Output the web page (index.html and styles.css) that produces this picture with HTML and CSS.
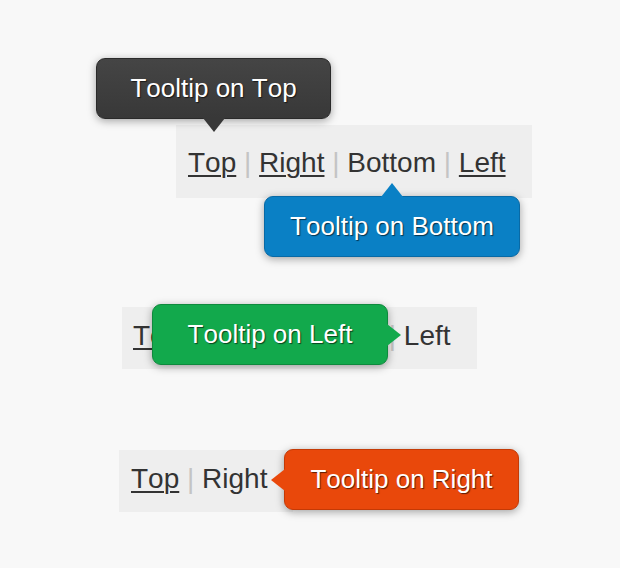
FILE: index.html
```html
<!DOCTYPE html>
<html>
<head>
<meta charset="utf-8">
<link rel="stylesheet" href="styles.css">
</head>
<body>
<div class="stage">
  <div class="panel panel-1">
    <a class="link">Top</a> <span class="sep">|</span> <a class="link">Right</a> <span class="sep">|</span> <span class="plain">Bottom</span> <span class="sep">|</span> <a class="link">Left</a>
    <div class="tip tip-top">Tooltip on Top</div>
    <div class="tip tip-bottom">Tooltip on Bottom</div>
  </div>
  <div class="panel panel-2">
    <a class="link">Top</a> <span class="sep">|</span> <a class="link">Right</a> <span class="sep">|</span> <a class="link">Bottom</a> <span class="sep">|</span> <span class="plain">Left</span>
    <div class="tip tip-left">Tooltip on Left</div>
  </div>
  <div class="panel panel-3">
    <a class="link">Top</a> <span class="sep">|</span> <span class="plain">Right</span>
    <div class="tip tip-right">Tooltip on Right</div>
  </div>
</div>
</body>
</html>
```
FILE: styles.css
```css
html, body {
  margin: 0;
  padding: 0;
}
body {
  width: 620px;
  height: 568px;
  background: #f8f8f8;
  font-family: "Liberation Sans", Arial, sans-serif;
  font-kerning: none;
  overflow: hidden;
}
.stage {
  display: flex;
  flex-direction: column;
  align-items: flex-start;
}
.panel {
  position: relative;
  background: #eeeeee;
  font-size: 28px;
  color: #333;
  white-space: nowrap;
  padding: 0 26px 0 12px;
}
.panel-1 {
  margin: 125px 0 0 176px;
  height: 73px;
  line-height: 75px;
}
.panel-2 {
  margin: 109px 0 0 122px;
  height: 62px;
  line-height: 58px;
  padding-left: 11px;
}
.panel-3 {
  margin: 81px 0 0 119px;
  height: 62px;
  line-height: 58px;
}
.link {
  color: #333;
  text-decoration: underline;
  text-decoration-thickness: 2px;
  text-underline-offset: 3px;
}
.plain {
  color: #333;
}
.sep {
  color: #c4c4c4;
}
.tip {
  position: absolute;
  height: 59px;
  line-height: 59px;
  border-radius: 9px;
  color: #fff;
  font-size: 26px;
  text-align: center;
  text-shadow: 1px 1px 1px rgba(0,0,0,0.6);
  box-shadow: 0 2px 8px rgba(0,0,0,0.35);
}
.tip::after {
  content: "";
  position: absolute;
  width: 0;
  height: 0;
  border: 11px solid transparent;
}
.tip-top {
  left: -80px;
  top: -67px;
  width: 233px;
  background: linear-gradient(#454545, #383838);
  border: 1px solid #2a2a2a;
}
.tip-top::after {
  left: 50%;
  margin-left: -11px;
  top: 100%;
  border-top: 14px solid #383838;
  border-bottom: 0;
}
.tip-bottom {
  left: 88px;
  top: 71px;
  width: 254px;
  background: #0a80c5;
  border: 1px solid #086aa6;
}
.tip-bottom::after {
  left: 50%;
  margin-left: -11px;
  bottom: 100%;
  border-bottom: 14px solid #0a80c5;
  border-top: 0;
}
.tip-left {
  left: 30px;
  top: -3px;
  width: 234px;
  background: #12a94c;
  border: 1px solid #0e8a3d;
}
.tip-left::after {
  left: 100%;
  top: 50%;
  margin-top: -11px;
  border-left: 14px solid #12a94c;
  border-right: 0;
}
.tip-right {
  left: 165px;
  top: -1px;
  width: 233px;
  background: #e9480b;
  border: 1px solid #c43a06;
}
.tip-right::after {
  right: 100%;
  top: 50%;
  margin-top: -11px;
  border-right: 14px solid #e9480b;
  border-left: 0;
}
```
